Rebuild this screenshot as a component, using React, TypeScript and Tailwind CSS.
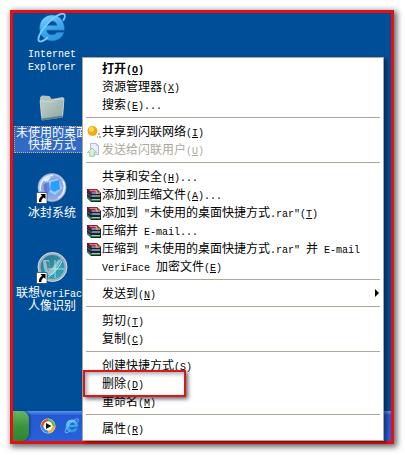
import { Fragment } from 'react'
import type { ReactNode } from 'react'
import clsx from 'clsx'

type Entry = {
  label: string
  accel?: string
  icon?: ReactNode
  bold?: boolean
  disabled?: boolean
  submenu?: boolean
  marked?: boolean
}

// Latin characters take half of a Chinese character cell
function MixedText({ text }: { text: string }) {
  const parts = text.split(/([\x20-\x7e]+)/).filter(Boolean)
  return (
    <>
      {parts.map((part, i) =>
        /^[\x20-\x7e]/.test(part) ? (
          <span key={i} className="text-[10px]">{part}</span>
        ) : (
          part
        )
      )}
    </>
  )
}

function IeIcon({ className }: { className: string }) {
  return (
    <svg viewBox="1 0 32 32" className={className} aria-hidden="true">
      <defs>
        <linearGradient id="ie" x1="0" y1="0" x2="0.4" y2="1">
          <stop offset="0" stopColor="#8fdcff" />
          <stop offset="0.5" stopColor="#43aef0" />
          <stop offset="1" stopColor="#2f96e0" />
        </linearGradient>
      </defs>
      <path
        fill="url(#ie)"
        stroke="#1565a8"
        strokeWidth="0.5"
        fillRule="evenodd"
        d="M17 3C10 3 4.500 8.500 4.500 16S10 29 17 29c5.800 0 10.500-3.300 12-8.700h-7.200c-1 1.700-2.600 2.500-4.800 2.500-3 0-5-1.700-5.200-4.500h17.700C30 9.500 25 3 17 3zm-5 10.300c.6-2.600 2.400-4.100 5-4.100s4.500 1.500 5 4.100z"
      />
      <path
        fill="none"
        stroke="#79ccfa"
        strokeWidth="1.800"
        strokeLinecap="round"
        d="M28.500 8C31 4 30 1 26.500 1.800 20 3.500 9.500 13 5 22c-3 6-1.500 8.500 2 7.200 1.800-.7 3.700-2 5.500-3.500"
      />
    </svg>
  )
}

function FolderIcon() {
  return (
    <svg viewBox="0 0 32 32" className="size-8" aria-hidden="true">
      <defs>
        <linearGradient id="folder" x1="0" y1="0" x2="1" y2="1">
          <stop offset="0" stopColor="#c3d0cb" />
          <stop offset="1" stopColor="#8fa6a5" />
        </linearGradient>
      </defs>
      <path fill="#b4c3bf" d="M4 5.500 6 3.500 13.500 4l2 3L27 5l1 2-1 17H5z" />
      <path fill="url(#folder)" stroke="#dce5de" strokeWidth="0.600" d="m4 8.500 11 1.500 3-2L28 6.500 26.500 25 6 28z" />
      <path fill="#5e7f8a" d="m6 28.500 20.500-3 .5-2L6 26.500z" />
    </svg>
  )
}

function ShortcutArrow() {
  return (
    <>
      <path fill="#fff" stroke="#1b3c5e" strokeWidth="0.700" d="M.5 20.500h10.500v11H.5z" />
      <path fill="#000" d="M4.500 22h5v5L7.800 25.400C6 26.500 5.300 28 5.300 30H3c-.3-2.700.8-4.800 3-6.300z" />
    </>
  )
}

function BallIcon() {
  return (
    <svg viewBox="0 0 32 32" className="size-8" aria-hidden="true">
      <defs>
        <radialGradient id="ball" cx="0.500" cy="0.500">
          <stop offset="0" stopColor="#3f8ff0" />
          <stop offset="0.600" stopColor="#7fa9e8" />
          <stop offset="0.850" stopColor="#9aa9e0" />
          <stop offset="1" stopColor="#d3e0f6" />
        </radialGradient>
      </defs>
      <circle cx="16" cy="15.500" r="14" fill="url(#ball)" stroke="#8ba6d6" strokeWidth="0.800" />
      <path fill="none" stroke="#e8f2ff" strokeWidth="1.600" d="M4.500 19C3 10 9 3.500 17 3.500M27 9c3 6 1 14-5 17" />
      <path fill="#a9d8ff" d="m11 9 11-2 4 9-7 7-8-4z" opacity="0.800" />
      <path fill="#2aa0fa" d="m15 10 8-2 1 9-6 3-4-3z" />
      <path fill="#5b62c8" d="m8 12 5-2 1 9-4 3c-2-3-3-7-2-10z" opacity="0.700" />
      <path fill="#fff" d="M8 8c2-2 4-3 7-3l-2 3-4 2z" opacity="0.800" />
      <ShortcutArrow />
    </svg>
  )
}

function VeriFaceIcon() {
  return (
    <svg viewBox="0 0 32 32" className="size-8" aria-hidden="true">
      <defs>
        <linearGradient id="veri" x1="0" y1="0" x2="1" y2="1">
          <stop offset="0" stopColor="#2a6f88" />
          <stop offset="1" stopColor="#35b3c4" />
        </linearGradient>
      </defs>
      <circle cx="16.500" cy="15" r="13.300" fill="url(#veri)" stroke="#9fb0bc" strokeWidth="2.800" />
      <circle cx="16.500" cy="15" r="14.500" fill="none" stroke="#e4edf2" strokeWidth="0.700" />
      <path fill="#a5c6d3" d="M7 8h6l1.500 10L22 8l4-1-9.500 16h-5C8.500 20 7 14 7 8z" opacity="0.850" />
      <path fill="#1f6d86" d="m10 9 3 1 1 7-2 2z" opacity="0.700" />
      <path fill="none" stroke="#b8f0f3" strokeWidth="0.800" d="M12 17h16M19 8v18" />
      <path fill="none" stroke="#dff8fa" strokeWidth="0.900" d="M12 25c5-3 11-9 14-16" />
      <ShortcutArrow />
    </svg>
  )
}

function RarIcon() {
  return (
    <svg viewBox="0 0 14 14" className="size-3.5" aria-hidden="true">
      <path fill="#2b1a2a" d="M0 1h10l4 4v9H4L0 10z" />
      <path fill="#b3264e" d="M.5 1.200h9L12.500 4h-9z" />
      <path fill="#d9778c" d="M2 2h7l1 1H3z" />
      <path fill="#e9dfe0" d="M4.500 4.500H13v1H4.500z" />
      <path fill="#8a1c3e" d="m0 2 3.500 3v1.500L0 3.500z" />
      <path fill="#2862b4" d="m0 5 3.500 2.500H13V9H3.500L0 6.300z" />
      <path fill="#a9dcec" d="M5 7.500h8v.9H5z" />
      <path fill="#1d8f50" d="m0 8 3.500 3H13v2H3.500L0 9.500z" />
      <path fill="#9fe0a8" d="M5 11h8v.9H5z" />
      <path fill="#d9a860" d="M8 2h1.500L11 4.500V6H9.500z" />
    </svg>
  )
}

function ShareIcon() {
  return (
    <svg viewBox="0 0 14 14" className="size-3.5" aria-hidden="true">
      <circle cx="5.500" cy="6" r="5" fill="#f6a713" />
      <circle cx="4.500" cy="4.500" r="2.500" fill="#ffdc58" />
      <path fill="#b7b7b7" d="M11 8h2v2h-2zM10 11h1v2h-1zM12 11h2v2h-2z" />
    </svg>
  )
}

function SendIcon() {
  return (
    <svg viewBox="0 0 14 14" className="size-3.5" aria-hidden="true">
      <path fill="#e9edfb" stroke="#b3b9e4" d="M3.500.5h6l2 2v9h-8z" />
      <path fill="#c9c6ec" d="M9 0v3h3z" />
      <path fill="#d6f0d0" stroke="#8fc78d" strokeWidth="0.800" d="m5 5 4.600 4.500H7.300v3.800H2.700V9.500H.5z" />
    </svg>
  )
}

function PlayerIcon() {
  return (
    <svg viewBox="0 0 16 16" className="size-4" aria-hidden="true">
      <circle cx="8" cy="8" r="7.500" fill="#dfe8f5" />
      <path fill="none" stroke="#e0562b" strokeWidth="3" d="M2.300 8A6 6 0 0 1 8 2.200" />
      <path fill="none" stroke="#6dba42" strokeWidth="3" d="M8 2.200A6 6 0 0 1 13.800 8" />
      <path fill="none" stroke="#f1b323" strokeWidth="3" d="M13.800 8A6 6 0 0 1 8 13.800" />
      <path fill="none" stroke="#4f86d8" strokeWidth="3" d="M8 13.800A6 6 0 0 1 2.200 8" />
      <circle cx="8" cy="8" r="4.400" fill="#fff" />
      <path fill="#111" d="m6 5 5.500 3L6 11z" />
    </svg>
  )
}

const shortcuts = [
  { lines: ['Internet', 'Explorer'], icon: <IeIcon className="size-8" /> },
  { lines: ['未使用的桌面', '快捷方式'], icon: <FolderIcon />, selected: true },
  { lines: ['冰封系统'], icon: <BallIcon /> },
  { lines: ['联想VeriFace', '人像识别'], icon: <VeriFaceIcon /> },
]

const groups: Entry[][] = [
  [
    { label: '打开', accel: 'O', bold: true },
    { label: '资源管理器', accel: 'X' },
    { label: '搜索', accel: 'E...' },
  ],
  [
    { label: '共享到闪联网络', accel: 'I', icon: <ShareIcon /> },
    { label: '发送给闪联用户', accel: 'U', icon: <SendIcon />, disabled: true },
  ],
  [
    { label: '共享和安全', accel: 'H...' },
    { label: '添加到压缩文件', accel: 'A...', icon: <RarIcon /> },
    { label: '添加到 "未使用的桌面快捷方式.rar"', accel: 'T', icon: <RarIcon /> },
    { label: '压缩并 E-mail...', icon: <RarIcon /> },
    { label: '压缩到 "未使用的桌面快捷方式.rar" 并 E-mail', icon: <RarIcon /> },
    { label: 'VeriFace 加密文件', accel: 'E' },
  ],
  [{ label: '发送到', accel: 'N', submenu: true }],
  [
    { label: '剪切', accel: 'T' },
    { label: '复制', accel: 'C' },
  ],
  [
    { label: '创建快捷方式', accel: 'S' },
    { label: '删除', accel: 'D', marked: true },
    { label: '重命名', accel: 'M' },
  ],
  [{ label: '属性', accel: 'R' }],
]

function MenuItem({ entry }: { entry: Entry }) {
  return (
    <button
      type="button"
      role="menuitem"
      disabled={entry.disabled}
      className={clsx(
        'relative flex h-[18px] w-full items-center gap-px px-1 text-left',
        entry.bold && 'font-bold',
        entry.disabled ? 'text-[#aca899]' : 'text-black'
      )}
    >
      <span className="w-3.5 shrink-0">{entry.icon}</span>
      <span className="grow pt-0.5 leading-4 whitespace-pre">
        <MixedText text={entry.label} />
        {entry.accel && (
          <span className="text-[10px]">
            (<u>{entry.accel[0]}</u>){entry.accel.slice(1)}
          </span>
        )}
      </span>
      {entry.submenu && (
        <svg viewBox="0 0 4 8" className="mb-0.5 h-2 w-1" aria-hidden="true">
          <path d="m0 0 4 4-4 4z" />
        </svg>
      )}
      {entry.marked && (
        <span className="absolute -top-[5px] left-0 z-10 h-[27px] w-[103px] border-2 border-[#d8191c] shadow-[2px_2px_4px_rgba(0,0,0,0.6),inset_2px_2px_4px_rgba(0,0,0,0.35)]" />
      )}
    </button>
  )
}

export default function App() {
  return (
    <main className="bg-white pt-2.5 pr-[11px] pb-[11px] pl-2.5 font-['Liberation_Mono','Noto_Sans_CJK_SC',monospace] text-[12px]">
      <div className="grid border-3 border-[#e60f14] shadow-[2px_2px_6px_1px_rgba(0,0,0,0.6)]">
        {/* Desktop with the taskbar under it */}
        <div className="col-start-1 row-start-1 flex min-w-0 flex-col overflow-hidden bg-[#004e98]">
          <div className="-mt-px ml-px w-[76px] grow">
            {shortcuts.map((item) => (
              <button
                key={item.lines[0]}
                type="button"
                className="flex h-20 w-full flex-col items-center gap-0.5 text-white"
              >
                {item.icon}
                <span
                  className={clsx(
                    'w-full border border-dotted pt-px text-center leading-3 whitespace-nowrap',
                    item.selected ? 'border-[#c9a878] bg-[#316ac5]' : 'border-transparent'
                  )}
                >
                  {item.lines.map((line, i) => (
                    <Fragment key={line}>
                      {i > 0 && <br />}
                      <MixedText text={line} />
                    </Fragment>
                  ))}
                </span>
              </button>
            ))}
          </div>
          <div className="flex h-[30px] items-center bg-linear-to-b from-[#5b92ee] from-0% via-[#2459d2] via-15% to-[#2761dd] to-100%">
            <button
              type="button"
              aria-label="开始"
              className="h-full w-4 rounded-r-lg bg-linear-to-b from-[#6bb565] via-[#3a943a] to-[#2f8531] shadow-[1px_0_3px_#12358a]"
            />
            <button type="button" aria-label="Media Player" className="ml-[11px]">
              <PlayerIcon />
            </button>
            <button type="button" aria-label="Internet Explorer" className="ml-2">
              <IeIcon className="size-4" />
            </button>
          </div>
        </div>

        <div
          role="menu"
          className="z-10 col-start-1 row-start-1 mt-11 mr-[7px] ml-[69px] border border-[#aca899] bg-white py-0.5 shadow-[3px_2px_3px_rgba(0,0,0,0.4)]"
        >
          {groups.map((group, i) => (
            <div key={group[0].label}>
              {i > 0 && <hr className="mx-[3px] mt-[3px] mb-[5px] border-[#aca899]" />}
              {group.map((entry) => (
                <MenuItem key={entry.label} entry={entry} />
              ))}
            </div>
          ))}
        </div>
      </div>
    </main>
  )
}
